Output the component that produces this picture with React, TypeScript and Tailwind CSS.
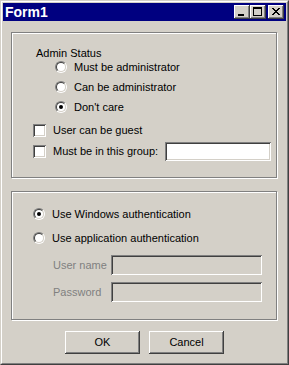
import type { ReactNode } from 'react';

const raised =
  'shadow-[inset_-1px_-1px_0_#404040,inset_1px_1px_0_#fff,inset_-2px_-2px_0_#808080,inset_2px_2px_0_#d4d0c8]';
const sunken =
  'shadow-[inset_1px_1px_0_#808080,inset_-1px_-1px_0_#fff,inset_2px_2px_0_#404040,inset_-2px_-2px_0_#d4d0c8]';

function Radio({ checked }: { checked?: boolean }) {
  return (
    <div className="w-[12px] h-[12px] shrink-0 rounded-full border border-t-[#808080] border-l-[#808080] border-r-white border-b-white">
      <div className="w-full h-full rounded-full border border-t-[#404040] border-l-[#404040] border-r-[#d4d0c8] border-b-[#d4d0c8] bg-white flex items-center justify-center">
        {checked && <div className="w-[4px] h-[4px] rounded-full bg-black" />}
      </div>
    </div>
  );
}

function Check() {
  return <div className={`w-[13px] h-[13px] shrink-0 bg-white ${sunken}`} />;
}

function Option({ children, checked }: { children: ReactNode; checked?: boolean }) {
  return (
    <div className="h-[14px] flex items-center gap-[7px] whitespace-nowrap">
      <Radio checked={checked} />
      <span>{children}</span>
    </div>
  );
}

function CaptionBtn({ children }: { children: ReactNode }) {
  return (
    <div className={`w-[16px] h-[14px] bg-[#d4d0c8] ${raised}`}>
      <svg width="16" height="14" viewBox="0 0 16 14" shapeRendering="crispEdges">
        {children}
      </svg>
    </div>
  );
}

export default function App() {
  return (
    <div className="w-[289px] h-[365px] font-['Liberation_Sans',Arial,sans-serif] text-[11px] text-black border border-t-[#d4d0c8] border-l-[#d4d0c8] border-r-[#404040] border-b-[#404040]">
      <div className="h-full border border-t-white border-l-white border-r-[#808080] border-b-[#808080] bg-[#d4d0c8] p-px flex flex-col">
        {/* title bar */}
        <div className="h-[18px] bg-[#000080] flex items-center pl-[2px] pr-[2px]">
          <span className="text-white font-bold text-[14px] leading-none">Form1</span>
          <div className="ml-auto flex items-center">
            <CaptionBtn>
              <rect x="4" y="9" width="6" height="2" fill="#000" />
            </CaptionBtn>
            <CaptionBtn>
              <rect x="3" y="2" width="9" height="2" fill="#000" />
              <rect x="3" y="4" width="1" height="7" fill="#000" />
              <rect x="11" y="4" width="1" height="7" fill="#000" />
              <rect x="3" y="10" width="9" height="1" fill="#000" />
            </CaptionBtn>
            <div className="ml-[2px]">
              <CaptionBtn>
                <path
                  d="M4 3h2v1h1v1h2v-1h1v-1h2v1h-1v1h-1v1h-1v1h1v1h1v1h1v1h-2v-1h-1v-1h-2v1h-1v1h-2v-1h1v-1h1v-1h1v-1h-1v-1h-1v-1h-1z"
                  fill="#000"
                />
              </CaptionBtn>
            </div>
          </div>
        </div>

        {/* group 1 */}
        <div className="mt-[11px] ml-[8px] mr-[9px] h-[146px] border border-[#808080] shadow-[inset_1px_1px_0_#fff,1px_1px_0_#fff] flex flex-col">
          <div className="mt-[13px] h-[14px] flex items-center pl-[24px]">Admin Status</div>
          <div className="flex flex-col gap-[6px] pl-[43px]">
            <Option>Must be administrator</Option>
            <Option>Can be administrator</Option>
            <Option checked>Don't care</Option>
          </div>
          <div className="mt-[9px] h-[14px] flex items-center gap-[7px] pl-[21px] whitespace-nowrap">
            <Check />
            <span>User can be guest</span>
          </div>
          <div className="mt-[5px] h-[19px] flex items-center gap-[7px] pl-[21px] pr-[7px] whitespace-nowrap">
            <Check />
            <span>Must be in this group:</span>
            <div className={`ml-auto w-[106px] h-[19px] shrink-0 bg-white ${sunken}`} />
          </div>
        </div>

        {/* group 2 */}
        <div className="mt-[13px] ml-[8px] mr-[9px] h-[129px] border border-[#808080] shadow-[inset_1px_1px_0_#fff,1px_1px_0_#fff] flex flex-col pl-[21px]">
          <div className="mt-[15px]">
            <Option checked>Use Windows authentication</Option>
          </div>
          <div className="mt-[10px]">
            <Option>Use application authentication</Option>
          </div>
          <div className="mt-[10px] h-[20px] flex items-center pl-[20px] text-[#808080] whitespace-nowrap">
            <span className="w-[58px]">User name</span>
            <div className={`w-[151px] h-[20px] bg-[#d4d0c8] ${sunken}`} />
          </div>
          <div className="mt-[7px] h-[20px] flex items-center pl-[20px] text-[#808080] whitespace-nowrap">
            <span className="w-[58px]">Password</span>
            <div className={`w-[151px] h-[20px] bg-[#d4d0c8] ${sunken}`} />
          </div>
        </div>

        {/* buttons */}
        <div className="mt-[11px] flex justify-center gap-[9px]">
          <div className={`w-[75px] h-[23px] bg-[#d4d0c8] flex items-center justify-center ${raised}`}>OK</div>
          <div className={`w-[75px] h-[23px] bg-[#d4d0c8] flex items-center justify-center ${raised}`}>Cancel</div>
        </div>
      </div>
    </div>
  );
}
